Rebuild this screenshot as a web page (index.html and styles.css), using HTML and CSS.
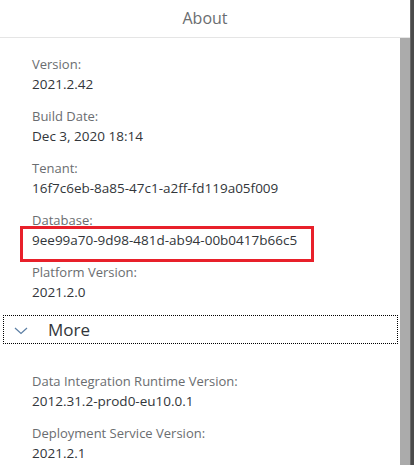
FILE: index.html
```html
<!DOCTYPE html>
<html>
<head>
<meta charset="utf-8">
<link rel="stylesheet" href="styles.css">
</head>
<body>
<div class="page">
  <div class="dialog">
    <div class="header">About</div>
    <div class="body">
      <div class="content">
        <div class="field"><div class="label">Version:</div><div class="value">2021.2.42</div></div>
        <div class="field"><div class="label">Build Date:</div><div class="value">Dec 3, 2020 18:14</div></div>
        <div class="field"><div class="label">Tenant:</div><div class="value">16f7c6eb-8a85-47c1-a2ff-fd119a05f009</div></div>
        <div class="field highlight"><div class="label">Database:</div><div class="value">9ee99a70-9d98-481d-ab94-00b0417b66c5</div><div class="redbox"></div></div>
        <div class="field"><div class="label">Platform Version:</div><div class="value">2021.2.0</div></div>
        <div class="more">
          <svg class="chev" width="14" height="8" viewBox="0 0 14 8"><path d="M1 1 L7 6.5 L13 1" fill="none" stroke="#5a7da3" stroke-width="1.2"/></svg>
          <span>More</span>
        </div>
        <div class="extra">
          <div class="field"><div class="label">Data Integration Runtime Version:</div><div class="value">2012.31.2-prod0-eu10.0.1</div></div>
          <div class="field"><div class="label">Deployment Service Version:</div><div class="value">2021.2.1</div></div>
        </div>
      </div>
      <div class="scrollbar"></div>
    </div>
  </div>
  <div class="backdrop"></div>
</div>
</body>
</html>
```
FILE: styles.css
```css
html, body { margin: 0; padding: 0; }
body {
  background: #4d4d4d;
  font-family: "Open Sans", "Liberation Sans", sans-serif;
  overflow: hidden;
}
.page { display: flex; height: 465px; }
.dialog {
  width: 410px;
  background: #fff;
  display: flex;
  flex-direction: column;
  height: 465px;
}
.backdrop {
  width: 4px;
  background: #4b4b4b;
  border-left: 1px solid #6a6a6a;
  box-sizing: border-box;
}
.header {
  height: 38px;
  line-height: 37px;
  text-align: center;
  font-size: 16px;
  color: #6a6d70;
  border-bottom: 1px solid #e5e5e5;
  box-sizing: border-box;
  flex: none;
}
.body { display: flex; flex: 1; min-height: 0; }
.content { flex: 1; padding-top: 17px; }
.scrollbar { width: 10px; background: #ababab; }
.field { padding-left: 32px; margin-bottom: 13px; position: relative; }
.label { font-size: 13px; line-height: 19px; color: #6a6d70; }
.value { font-size: 13.5px; line-height: 20px; color: #32363a; }
.redbox {
  position: absolute;
  left: 20px; top: 15px;
  width: 288px; height: 30px;
  border: 3px solid #e8202a;
}
.more {
  margin: 0 2px 0 3px;
  height: 27px;
  border: 1px dotted #000;
  display: flex;
  align-items: center;
}
.chev { margin-left: 10px; margin-top: 2px; }
.more span { margin-left: 20px; font-size: 17px; color: #32363a; }
.extra { padding-top: 28px; }
```
